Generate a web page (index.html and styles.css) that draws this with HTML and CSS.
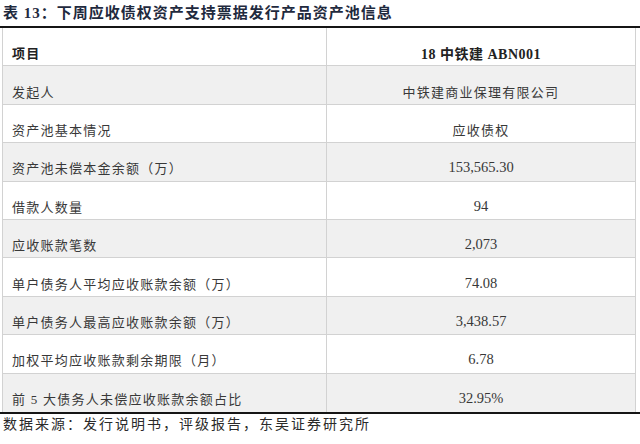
FILE: index.html
```html
<!DOCTYPE html>
<html lang="zh">
<head>
<meta charset="utf-8">
<link rel="stylesheet" href="styles.css">
</head>
<body>
<div class="page">
  <div class="title">表 13：下周应收债权资产支持票据发行产品资产池信息</div>
  <div class="tbl">
    <div class="row head">
      <div class="c1">项目</div>
      <div class="c2">18 中铁建 ABN001</div>
    </div>
    <div class="row alt">
      <div class="c1">发起人</div>
      <div class="c2">中铁建商业保理有限公司</div>
    </div>
    <div class="row">
      <div class="c1">资产池基本情况</div>
      <div class="c2">应收债权</div>
    </div>
    <div class="row alt">
      <div class="c1">资产池未偿本金余额（万）</div>
      <div class="c2 num">153,565.30</div>
    </div>
    <div class="row">
      <div class="c1">借款人数量</div>
      <div class="c2 num">94</div>
    </div>
    <div class="row alt">
      <div class="c1">应收账款笔数</div>
      <div class="c2 num">2,073</div>
    </div>
    <div class="row">
      <div class="c1">单户债务人平均应收账款余额（万）</div>
      <div class="c2 num">74.08</div>
    </div>
    <div class="row alt">
      <div class="c1">单户债务人最高应收账款余额（万）</div>
      <div class="c2 num">3,438.57</div>
    </div>
    <div class="row">
      <div class="c1">加权平均应收账款剩余期限（月）</div>
      <div class="c2 num">6.78</div>
    </div>
    <div class="row alt last">
      <div class="c1">前 5 大债务人未偿应收账款余额占比</div>
      <div class="c2 num">32.95%</div>
    </div>
  </div>
  <div class="source">数据来源：发行说明书，评级报告，东吴证券研究所</div>
</div>
</body>
</html>
```

FILE: styles.css
```css
html, body {
  margin: 0;
  padding: 0;
  background: #ffffff;
}

.page {
  width: 640px;
  height: 444px;
  font-family: "Liberation Serif", "Noto Sans CJK SC", serif;
  color: #383838;
}

.title {
  height: 26px;
  line-height: 26px;
  padding-left: 3px;
  font-size: 15px;
  font-weight: bold;
  letter-spacing: 1px;
  color: #1f2a3e;
  white-space: nowrap;
}

.tbl {
  border-top: 2px solid #151515;
  border-bottom: 2px solid #151515;
  padding: 0 4px 0 2px;
}

.row {
  display: grid;
  grid-template-columns: 324px 1fr;
  height: 38.4px;
  box-sizing: border-box;
  border-bottom: 1px solid #d2d2d2;
  background: #ffffff;
}

.row.alt {
  background: #f0f0f0;
}

.row.last {
  border-bottom: none;
}

.c1, .c2 {
  display: flex;
  align-items: center;
  padding-top: 12px;
  box-sizing: border-box;
  font-size: 13px;
  letter-spacing: 1.25px;
  white-space: nowrap;
}

.c1 {
  border-left: 1px solid #d2d2d2;
  padding-left: 9px;
}

.c2 {
  border-left: 1px solid #d2d2d2;
  border-right: 1px solid #d2d2d2;
  justify-content: center;
}

.num {
  font-size: 14.5px;
  letter-spacing: 0;
}

.head .c1, .head .c2 {
  font-weight: bold;
  color: #222222;
}

.head .c2 {
  font-size: 14px;
  letter-spacing: 0.5px;
}

.source {
  padding-left: 3px;
  height: 28px;
  line-height: 22px;
  font-size: 14px;
  letter-spacing: 2px;
  color: #2a2a2a;
  white-space: nowrap;
}
```
